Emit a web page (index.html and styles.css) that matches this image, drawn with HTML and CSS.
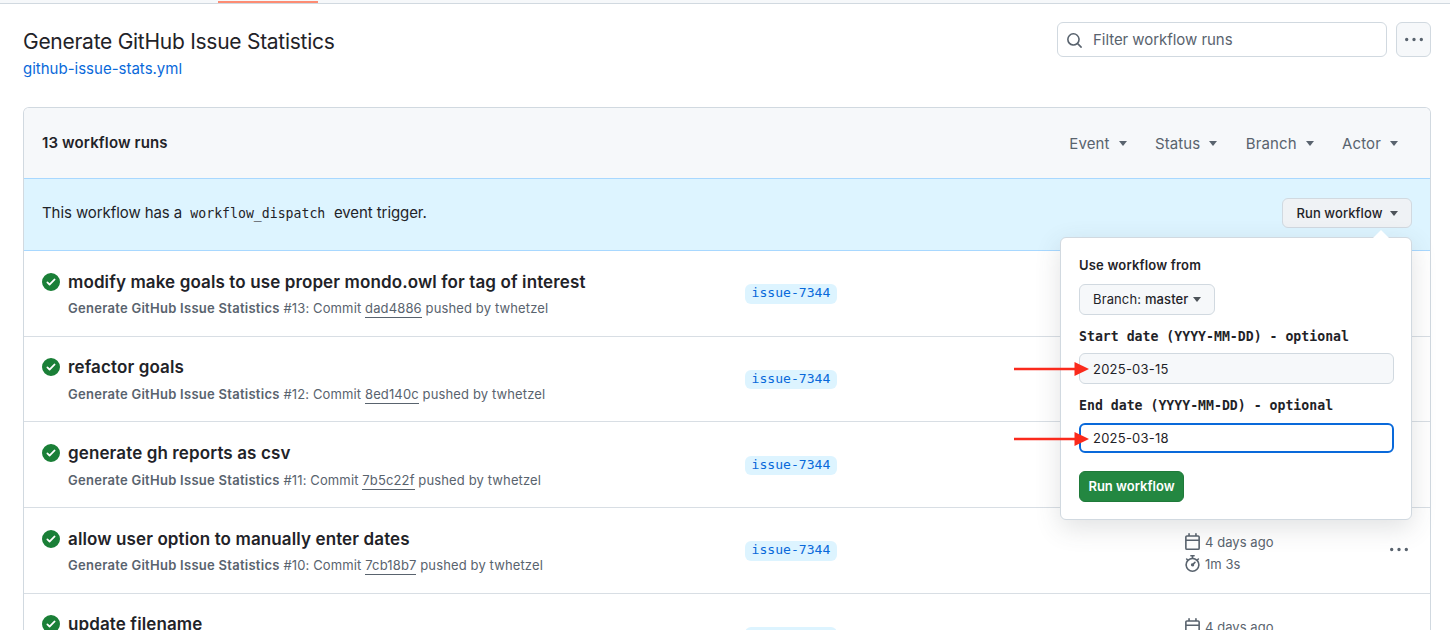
FILE: index.html
```
<!DOCTYPE html>
<html lang="en">
<head>
<meta charset="utf-8">
<title>Generate GitHub Issue Statistics</title>
<link rel="stylesheet" href="styles.css">
</head>
<body>
<svg class="defs" aria-hidden="true">
  <symbol id="check" viewBox="0 0 16 16"><path d="M8 16A8 8 0 1 1 8 0a8 8 0 0 1 0 16Zm3.78-9.72a.751.751 0 0 0-.018-1.042.751.751 0 0 0-1.042-.018L6.75 9.19 5.28 7.72a.751.751 0 0 0-1.042.018.751.751 0 0 0-.018 1.042l2 2a.75.75 0 0 0 1.06 0Z"/></symbol>
  <symbol id="dots" viewBox="0 0 16 16"><path d="M8 9a1.5 1.5 0 1 0 0-3 1.5 1.5 0 0 0 0 3ZM1.5 9a1.5 1.5 0 1 0 0-3 1.5 1.5 0 0 0 0 3Zm13 0a1.5 1.5 0 1 0 0-3 1.5 1.5 0 0 0 0 3Z"/></symbol>
  <symbol id="search" viewBox="0 0 16 16"><path d="M10.68 11.74a6 6 0 0 1-7.922-8.982 6 6 0 0 1 8.982 7.922l3.04 3.04a.749.749 0 0 1-.326 1.275.749.749 0 0 1-.734-.215ZM11.5 7a4.499 4.499 0 1 0-8.997 0A4.499 4.499 0 0 0 11.5 7Z"/></symbol>
  <symbol id="calendar" viewBox="0 0 16 16"><path d="M4.75 0a.75.75 0 0 1 .75.75V2h5V.75a.75.75 0 0 1 1.5 0V2h1.25c.966 0 1.75.784 1.75 1.75v10.5A1.75 1.75 0 0 1 13.25 16H2.75A1.75 1.75 0 0 1 1 14.250V3.75C1 2.784 1.784 2 2.750 2H4V.75A.75.75 0 0 1 4.75 0ZM2.5 7.500v6.750c0 .138.112.250.250.250h10.500a.25.25 0 0 0 .250-.250V7.500Zm10.750-4H2.750a.25.25 0 0 0-.250.250V6h11V3.750a.25.25 0 0 0-.250-.250Z"/></symbol>
  <symbol id="stopwatch" viewBox="0 0 16 16"><path d="M5.75.75A.75.75 0 0 1 6.5 0h3a.75.75 0 0 1 0 1.500h-.750v1l-.001.041a6.724 6.724 0 0 1 3.464 1.435l.007-.006.750-.750a.749.749 0 0 1 1.275.326.749.749 0 0 1-.215.734l-.750.750-.006.007a6.750 6.750 0 1 1-10.548 0L2.720 5.030l-.750-.750a.751.751 0 0 1 .018-1.042.751.751 0 0 1 1.042-.018l.750.750.007.006A6.720 6.720 0 0 1 7.250 2.541V1.500H6.500a.75.75 0 0 1-.750-.750ZM8 14.500a5.250 5.250 0 1 0-.001-10.501A5.250 5.250 0 0 0 8 14.500Zm.389-6.700 1.330-1.330a.75.75 0 1 1 1.061 1.060L9.450 8.861A1.503 1.503 0 0 1 8 10.750a1.499 1.499 0 1 1 .389-2.950Z"/></symbol>
</svg>

<div class="tabs"><span class="tab-active"></span></div>

<header class="head">
  <div>
    <h1 class="title">Generate GitHub Issue Statistics</h1>
    <a class="file">github-issue-stats.yml</a>
  </div>
  <div class="tools">
    <div class="filter"><svg class="i-search"><use href="#search"/></svg><span>Filter workflow runs</span></div>
    <button class="kebab"><svg class="i-dots"><use href="#dots"/></svg></button>
  </div>
</header>

<main class="box">
  <div class="box-head">
    <strong class="count">13 workflow runs</strong>
    <nav class="filters">
      <span>Event<i class="caret"></i></span>
      <span>Status<i class="caret"></i></span>
      <span>Branch<i class="caret"></i></span>
      <span>Actor<i class="caret"></i></span>
    </nav>
  </div>

  <div class="dispatch">
    <p class="notice">This workflow has a <code>workflow_dispatch</code> event trigger.</p>
    <div class="run">
      <button class="run-toggle">Run workflow<i class="caret"></i></button>
      <form class="popover">
        <div class="from">Use workflow from</div>
        <button type="button" class="branch-pick"><span>Branch:</span>&nbsp;<b>master</b><i class="caret"></i></button>
        <label class="lbl">Start date (YYYY-MM-DD) - optional</label>
        <div class="field">2025-03-15</div>
        <label class="lbl">End date (YYYY-MM-DD) - optional</label>
        <div class="field field-focus">2025-03-18</div>
        <button type="button" class="submit">Run workflow</button>
        <svg class="arrow arrow-start" viewBox="0 0 76 16"><path d="M0 8H62" stroke="#fa2a1c" stroke-width="2.6"/><path d="M60.500 1 75 8 60.500 15Z" fill="#fa2a1c"/></svg>
        <svg class="arrow arrow-end" viewBox="0 0 76 16"><path d="M0 8H62" stroke="#fa2a1c" stroke-width="2.6"/><path d="M60.500 1 75 8 60.500 15Z" fill="#fa2a1c"/></svg>
      </form>
    </div>
  </div>

  <section class="row">
    <svg class="i-check"><use href="#check"/></svg>
    <div class="info"><h2 class="name">modify make goals to use proper mondo.owl for tag of interest</h2>
      <p class="meta"><b>Generate GitHub Issue Statistics</b> #13: Commit <a>dad4886</a> pushed by twhetzel</p></div>
    <div class="ref"><span>issue-7344</span></div>
  </section>
  <section class="row">
    <svg class="i-check"><use href="#check"/></svg>
    <div class="info"><h2 class="name">refactor goals</h2>
      <p class="meta"><b>Generate GitHub Issue Statistics</b> #12: Commit <a>8ed140c</a> pushed by twhetzel</p></div>
    <div class="ref"><span>issue-7344</span></div>
  </section>
  <section class="row">
    <svg class="i-check"><use href="#check"/></svg>
    <div class="info"><h2 class="name">generate gh reports as csv</h2>
      <p class="meta"><b>Generate GitHub Issue Statistics</b> #11: Commit <a>7b5c22f</a> pushed by twhetzel</p></div>
    <div class="ref"><span>issue-7344</span></div>
  </section>
  <section class="row">
    <svg class="i-check"><use href="#check"/></svg>
    <div class="info"><h2 class="name">allow user option to manually enter dates</h2>
      <p class="meta"><b>Generate GitHub Issue Statistics</b> #10: Commit <a>7cb18b7</a> pushed by twhetzel</p></div>
    <div class="ref"><span>issue-7344</span></div>
    <div class="times">
      <div><svg class="i-time"><use href="#calendar"/></svg>4 days ago</div>
      <div><svg class="i-time"><use href="#stopwatch"/></svg>1m 3s</div>
    </div>
    <svg class="i-dots row-dots"><use href="#dots"/></svg>
  </section>
  <section class="row">
    <svg class="i-check"><use href="#check"/></svg>
    <div class="info"><h2 class="name">update filename</h2></div>
    <div class="ref"><span>issue-7344</span></div>
    <div class="times">
      <div><svg class="i-time"><use href="#calendar"/></svg>4 days ago</div>
    </div>
  </section>
</main>
</body>
</html>
```

FILE: styles.css
```
* { box-sizing: border-box; }
html, body { height: 630px; overflow: hidden; }
body { margin: 0; background: #fff; color: #1f2328; font-family: Inter, "Liberation Sans", sans-serif; font-size: 15px; }
h1, h2, p { margin: 0; }
button { font-family: inherit; padding: 0; color: inherit; }
svg { fill: #59636e; flex: none; }
.defs { display: none; }

.tabs { height: 4px; background: #f6f8fa; border-bottom: 1px solid #d1d9e0; padding: 1px 0 0 218px; }
.tab-active { display: block; width: 100px; height: 2px; background: #fd8c73; }

.head { display: flex; justify-content: space-between; height: 103px; padding: 18px 19px 0 23px; }
.title { font-size: 21px; font-weight: 400; line-height: 37px; padding-top: 1px; letter-spacing: -0.270px; }
.file { display: block; color: #0969da; font-size: 15px; line-height: 17px; letter-spacing: 0; }
.tools { display: flex; gap: 9px; }
.filter { display: flex; align-items: center; gap: 9px; width: 330px; height: 35px; padding-left: 8px; border: 1px solid #d1d9e0; border-radius: 6px; color: #59636e; font-size: 15px; }
.filter span { padding-left: 1px; letter-spacing: -0.050px; }
.i-search { width: 17px; height: 17px; margin-top: 2px; }
.kebab { display: flex; align-items: center; justify-content: center; width: 35px; height: 35px; background: #f6f8fa; border: 1px solid #d1d9e0; border-radius: 6px; }
.i-dots { width: 18px; height: 18px; }

.box { margin: 0 19px 0 23px; border: 1px solid #d1d9e0; border-bottom: 0; border-radius: 6px 6px 0 0; }
.box-head { display: flex; align-items: center; justify-content: space-between; height: 70px; padding: 0 32px 0 18px; background: #f6f8fa; border-radius: 5px 5px 0 0; }
.count { font-weight: 600; font-size: 15px; letter-spacing: 0.140px; padding-bottom: 2px; }
.filters { display: flex; gap: 28.400px; color: #59636e; font-size: 15px; letter-spacing: 0.120px; }
.filters span { display: flex; align-items: center; }
.caret { display: inline-block; border: 4.500px solid transparent; border-top: 5px solid currentColor; border-bottom: 0; margin-left: 9px; }

.dispatch { display: flex; align-items: center; justify-content: space-between; height: 73px; padding: 0 18px; background: #ddf4ff; border: solid #a8d8ff; border-width: 1px 0; }
.notice { font-size: 15px; letter-spacing: -0.080px; padding-bottom: 4px; }
.notice code { font: 13.200px "DejaVu Sans Mono", monospace; letter-spacing: 0; margin: 0 4.500px 0 4px; }
.run { position: relative; padding-bottom: 3px; }
.run-toggle { display: flex; align-items: center; justify-content: center; width: 130px; height: 30px; background: #eff2f5; border: 1px solid #d1d9e0; border-radius: 6px; font-size: 13px; font-weight: 500; letter-spacing: 0.080px; }
.run-toggle .caret { margin-left: 7px; color: #4d5359; }

.popover { position: absolute; z-index: 2; top: 39px; right: 0; width: 352px; height: 283px; padding: 18px 17px 18px 18px; background: #fff; border: 1px solid #d1d9e0; border-radius: 6px; box-shadow: 0 8px 26px rgba(66, 74, 83, .16); font-size: 13px; }
.popover::before { content: ""; position: absolute; top: -8px; right: 22px; border: 8px solid transparent; border-top: 0; border-bottom-color: #fff; }
.from { font-weight: 600; line-height: 18px; margin-bottom: 10px; letter-spacing: 0.180px; }
.branch-pick { display: flex; align-items: center; padding: 0 0 1px 13px; width: 136px; height: 31px; background: #f6f8fa; border: 1px solid #d1d9e0; border-radius: 6px; font-size: 13px; letter-spacing: 0.120px; }
.branch-pick b { font-weight: 500; }
.branch-pick .caret { margin-left: 4px; color: #4d5359; }
.lbl { display: block; margin-top: 12px; font: bold 13.200px/19px "DejaVu Sans Mono", monospace; white-space: nowrap; }
.field { display: flex; align-items: center; height: 31px; margin-top: 7px; padding-left: 13px; background: #f6f8fa; border: 1px solid #d1d9e0; border-radius: 6px; letter-spacing: 0.230px; }
.field-focus { height: 30px; margin-top: 8px; background: #fff; border: 2px solid #0969da; padding-left: 12px; }
.submit { display: block; width: 105px; height: 31px; margin-top: 18px; padding-bottom: 1px; background: #238741; border: 1px solid #1f7a3a; border-radius: 6px; color: #fff; font-size: 13px; font-weight: 600; }
.arrow { position: absolute; left: -47px; width: 76px; height: 16px; }
.arrow-start { top: 123px; }
.arrow-end { top: 193px; }

.row { display: flex; height: 85.700px; padding: 0 18px; border-bottom: 1px solid #d8dee4; }
.row:last-child { height: 40px; border: 0; }
.i-check { width: 18px; height: 18px; margin-top: 21.600px; fill: #1a7f37; }
.info { width: 667px; margin-left: 8px; padding-top: 18.600px; }
.name { font-size: 17px; line-height: 24px; font-weight: 600; letter-spacing: 0.115px; }
.meta { margin-top: 5.700px; font-size: 13px; line-height: 19px; color: #59636e; letter-spacing: 0.130px; }
.meta b { font-weight: 600; letter-spacing: 0.270px; }
.meta a { display: inline-block; border-bottom: 1px solid #59636e; line-height: 18px; }
.ref { display: flex; width: 439px; margin: 33.200px 0 0 10px; }
.ref span { height: 19.500px; padding: 0 6.500px; border-radius: 6px; background: #ddf4ff; color: #0969da; font: 13.100px/18.500px "DejaVu Sans Mono", monospace; }
.times { width: 206px; padding-top: 22.600px; color: #59636e; font-size: 13px; letter-spacing: 0.050px; }
.times div { display: flex; align-items: center; gap: 4px; height: 22px; }
.i-time { width: 17px; height: 17px; margin-top: -1px; }
.row-dots { margin-top: 32.500px; }
```
